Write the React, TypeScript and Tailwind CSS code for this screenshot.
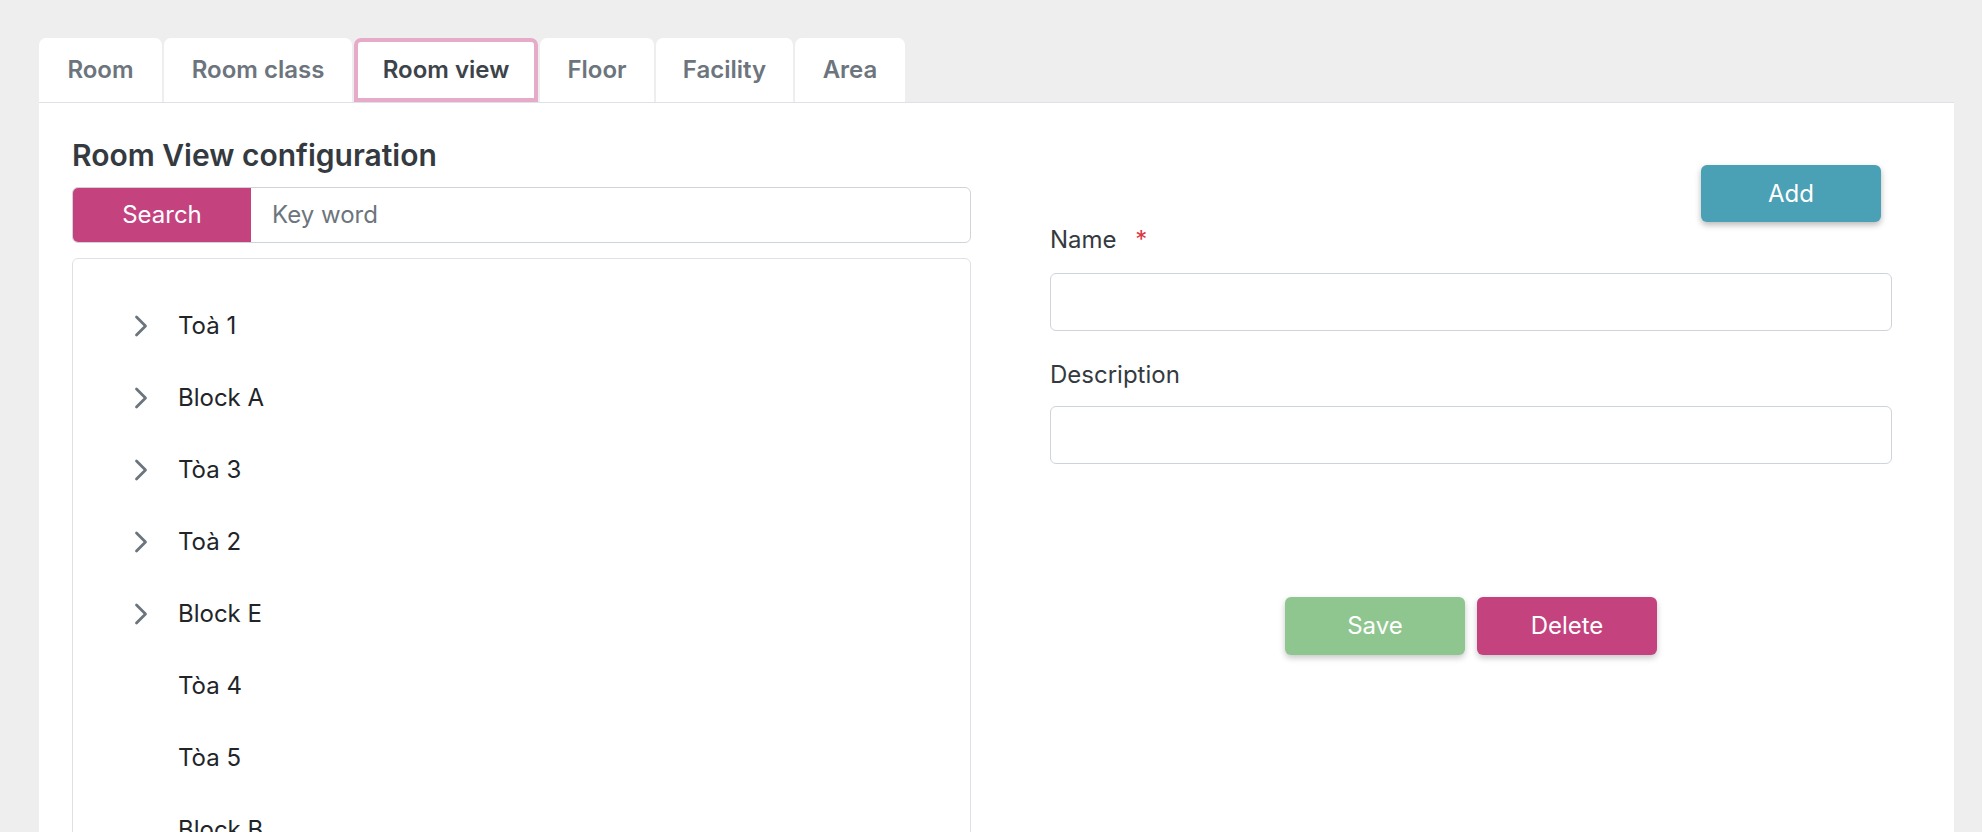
import React, { useState } from 'react';

const tabs = [
  { label: 'Room', w: 'w-[123px]' },
  { label: 'Room class', w: 'w-[188px]' },
  { label: 'Room view', w: 'w-[184px]' },
  { label: 'Floor', w: 'w-[114px]' },
  { label: 'Facility', w: 'w-[137px]' },
  { label: 'Area', w: 'w-[110px]' },
];

const nodes = [
  { name: 'Toà 1', children: true },
  { name: 'Block A', children: true },
  { name: 'Tòa 3', children: true },
  { name: 'Toà 2', children: true },
  { name: 'Block E', children: true },
  { name: 'Tòa 4', children: false },
  { name: 'Tòa 5', children: false },
  { name: 'Block B', children: false },
  { name: 'Block C', children: false },
];

function Chevron() {
  return (
    <svg width="16" height="24" viewBox="0 0 16 24" fill="none">
      <polyline points="3.5,3 12.5,12 3.5,21" stroke="#6c757d" strokeWidth="2.8" strokeLinecap="round" strokeLinejoin="round" />
    </svg>
  );
}

export default function App() {
  const [active, setActive] = useState('Room view');
  const [keyword, setKeyword] = useState('');
  const [name, setName] = useState('');
  const [description, setDescription] = useState('');

  return (
    <div className="min-h-screen bg-[#eeeeee] pt-[38px] pl-[39px] pr-[28px] [font-family:Inter,sans-serif]">
      <div className="flex gap-[2px] h-[64px]">
        {tabs.map((tab) => (
          <button
            key={tab.label}
            onClick={() => setActive(tab.label)}
            className={`${tab.w} h-full bg-white rounded-t-[7px] text-[24px] font-semibold flex items-center justify-center ${
              active === tab.label
                ? 'border-4 border-[#e7abca] text-[#3d434a]'
                : 'text-[#6c757d]'
            }`}
          >
            {tab.label}
          </button>
        ))}
      </div>

      <div className="bg-white border-t border-[#dee2e6] min-h-[900px] flex pl-[33px]">
        <div className="w-[899px] pt-[35px]">
          <h2 className="text-[30px] leading-[34px] font-semibold text-[#343a40]">Room View configuration</h2>

          <div className="mt-[15px] h-[56px] flex border border-[#ced4da] rounded-[6px] overflow-hidden">
            <button className="w-[178px] bg-[#c4437f] text-white text-[24px]">Search</button>
            <input
              value={keyword}
              onChange={(e) => setKeyword(e.target.value)}
              placeholder="Key word"
              className="flex-1 px-[21px] text-[24px] text-[#212529] placeholder-[#6c757d] outline-none"
            />
          </div>

          <div className="mt-[15px] border border-[#dee2e6] rounded-[6px] pt-[31px] pb-6">
            {nodes.map((node) => (
              <div key={node.name} className="h-[72px] flex items-center pl-[60px]">
                <div className="w-[16px] mr-[29px] flex items-center">{node.children && <Chevron />}</div>
                <span className="text-[24px] text-[#212529]">{node.name}</span>
              </div>
            ))}
          </div>
        </div>

        <div className="ml-[79px] w-[842px] pt-[62px]">
          <div className="flex justify-end pr-[11px]">
            <button className="w-[180px] h-[57px] rounded-[6px] bg-[#4aa0b5] text-white text-[24px] shadow-[0_3px_6px_rgba(0,0,0,0.28)]">
              Add
            </button>
          </div>

          <label className="mt-[4px] block text-[24px] leading-[28px] text-[#343a40]">
            Name <span className="ml-[12px] text-[#dc3545]">*</span>
          </label>
          <input
            value={name}
            onChange={(e) => setName(e.target.value)}
            className="mt-[19px] w-full h-[58px] border border-[#ced4da] rounded-[6px] px-4 text-[24px] outline-none"
          />

          <label className="mt-[30px] block text-[24px] leading-[28px] text-[#343a40]">Description</label>
          <input
            value={description}
            onChange={(e) => setDescription(e.target.value)}
            className="mt-[17px] w-full h-[58px] border border-[#ced4da] rounded-[6px] px-4 text-[24px] outline-none"
          />

          <div className="mt-[133px] flex justify-center gap-[12px]">
            <button className="w-[180px] h-[58px] rounded-[6px] bg-[#8fc68f] text-white text-[24px] shadow-[0_3px_6px_rgba(0,0,0,0.22)]">
              Save
            </button>
            <button className="w-[180px] h-[58px] rounded-[6px] bg-[#c4437f] text-white text-[24px] shadow-[0_3px_6px_rgba(0,0,0,0.22)]">
              Delete
            </button>
          </div>
        </div>
      </div>
    </div>
  );
}
